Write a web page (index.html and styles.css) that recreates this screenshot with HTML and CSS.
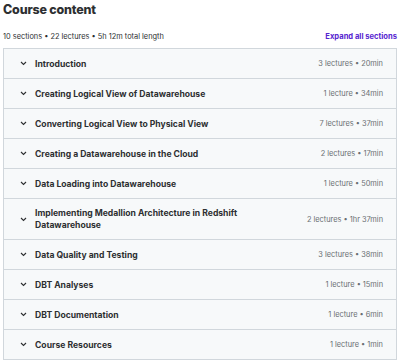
FILE: index.html
```html
<!DOCTYPE html>
<html lang="en">

<head>
    <meta charset="UTF-8">
    <meta name="viewport" content="width=device-width, initial-scale=1.0">
    <title>Course content</title>
    <link rel="stylesheet" href="styles.css">
</head>

<body>
    <div class="curriculum">
        <h2 class="title">Course content</h2>

        <!-- Resumen y enlace -->
        <div class="summary">
            <span>10 sections • 22 lectures • 5h 12m total length</span>
            <a href="#" class="expand">Expand all sections</a>
        </div>

        <!-- Secciones -->
        <div class="sections">
            <div class="section">
                <span class="chev"><svg width="7" height="5" viewBox="0 0 7 5"><path d="M1 1l2.5 2.5L6 1" fill="none" stroke="#2d2f31" stroke-width="1.1"/></svg></span>
                <span class="name">Introduction</span>
                <span class="meta">3 lectures • 20min</span>
            </div>
            <div class="section">
                <span class="chev"><svg width="7" height="5" viewBox="0 0 7 5"><path d="M1 1l2.5 2.5L6 1" fill="none" stroke="#2d2f31" stroke-width="1.1"/></svg></span>
                <span class="name">Creating Logical View of Datawarehouse</span>
                <span class="meta">1 lecture • 34min</span>
            </div>
            <div class="section">
                <span class="chev"><svg width="7" height="5" viewBox="0 0 7 5"><path d="M1 1l2.5 2.5L6 1" fill="none" stroke="#2d2f31" stroke-width="1.1"/></svg></span>
                <span class="name">Converting Logical View to Physical View</span>
                <span class="meta">7 lectures • 37min</span>
            </div>
            <div class="section">
                <span class="chev"><svg width="7" height="5" viewBox="0 0 7 5"><path d="M1 1l2.5 2.5L6 1" fill="none" stroke="#2d2f31" stroke-width="1.1"/></svg></span>
                <span class="name">Creating a Datawarehouse in the Cloud</span>
                <span class="meta">2 lectures • 17min</span>
            </div>
            <div class="section">
                <span class="chev"><svg width="7" height="5" viewBox="0 0 7 5"><path d="M1 1l2.5 2.5L6 1" fill="none" stroke="#2d2f31" stroke-width="1.1"/></svg></span>
                <span class="name">Data Loading into Datawarehouse</span>
                <span class="meta">1 lecture • 50min</span>
            </div>
            <div class="section tall">
                <span class="chev"><svg width="7" height="5" viewBox="0 0 7 5"><path d="M1 1l2.5 2.5L6 1" fill="none" stroke="#2d2f31" stroke-width="1.1"/></svg></span>
                <span class="name">Implementing Medallion Architecture in Redshift Datawarehouse</span>
                <span class="meta">2 lectures • 1hr 37min</span>
            </div>
            <div class="section">
                <span class="chev"><svg width="7" height="5" viewBox="0 0 7 5"><path d="M1 1l2.5 2.5L6 1" fill="none" stroke="#2d2f31" stroke-width="1.1"/></svg></span>
                <span class="name">Data Quality and Testing</span>
                <span class="meta">3 lectures • 38min</span>
            </div>
            <div class="section">
                <span class="chev"><svg width="7" height="5" viewBox="0 0 7 5"><path d="M1 1l2.5 2.5L6 1" fill="none" stroke="#2d2f31" stroke-width="1.1"/></svg></span>
                <span class="name">DBT Analyses</span>
                <span class="meta">1 lecture • 15min</span>
            </div>
            <div class="section">
                <span class="chev"><svg width="7" height="5" viewBox="0 0 7 5"><path d="M1 1l2.5 2.5L6 1" fill="none" stroke="#2d2f31" stroke-width="1.1"/></svg></span>
                <span class="name">DBT Documentation</span>
                <span class="meta">1 lecture • 6min</span>
            </div>
            <div class="section">
                <span class="chev"><svg width="7" height="5" viewBox="0 0 7 5"><path d="M1 1l2.5 2.5L6 1" fill="none" stroke="#2d2f31" stroke-width="1.1"/></svg></span>
                <span class="name">Course Resources</span>
                <span class="meta">1 lecture • 1min</span>
            </div>
        </div>
    </div>
</body>

</html>
```

FILE: styles.css
```css
/* Contenido del curso */
body {
    font-family: Inter, "Noto Sans", sans-serif;
    background-color: #fff;
    color: #2d2f31;
    margin: 0;
    padding: 0;
}

.curriculum {
    padding: 0 3px 0 3px;
}

.title {
    font-size: 12.5px;
    font-weight: 800;
    margin: 0;
    padding: 2px 0 0 0;
    line-height: 16px;
    letter-spacing: -0.2px;
}

.summary {
    display: flex;
    justify-content: space-between;
    align-items: center;
    font-size: 7.4px;
    color: #2d2f31;
    margin-top: 13px;
    height: 10px;
    padding-bottom: 7px;
}

.expand {
    color: #5624d0;
    font-weight: 700;
    text-decoration: none;
    font-size: 7.6px;
}

.sections {
    border: 1px solid #d1d7dc;
    border-bottom: none;
}

.section {
    display: flex;
    align-items: center;
    height: 29px;
    background-color: #f7f9fa;
    border-bottom: 1px solid #d1d7dc;
    padding: 0 13px 0 16px;
}

.section.tall {
    height: 40px;
}

.chev {
    width: 15px;
    display: flex;
    align-items: center;
}

.name {
    flex: 1;
    font-size: 8.6px;
    font-weight: 700;
    line-height: 12px;
    padding-right: 40px;
}

.meta {
    font-size: 7.4px;
    color: #6a6f73;
    white-space: nowrap;
}
```
